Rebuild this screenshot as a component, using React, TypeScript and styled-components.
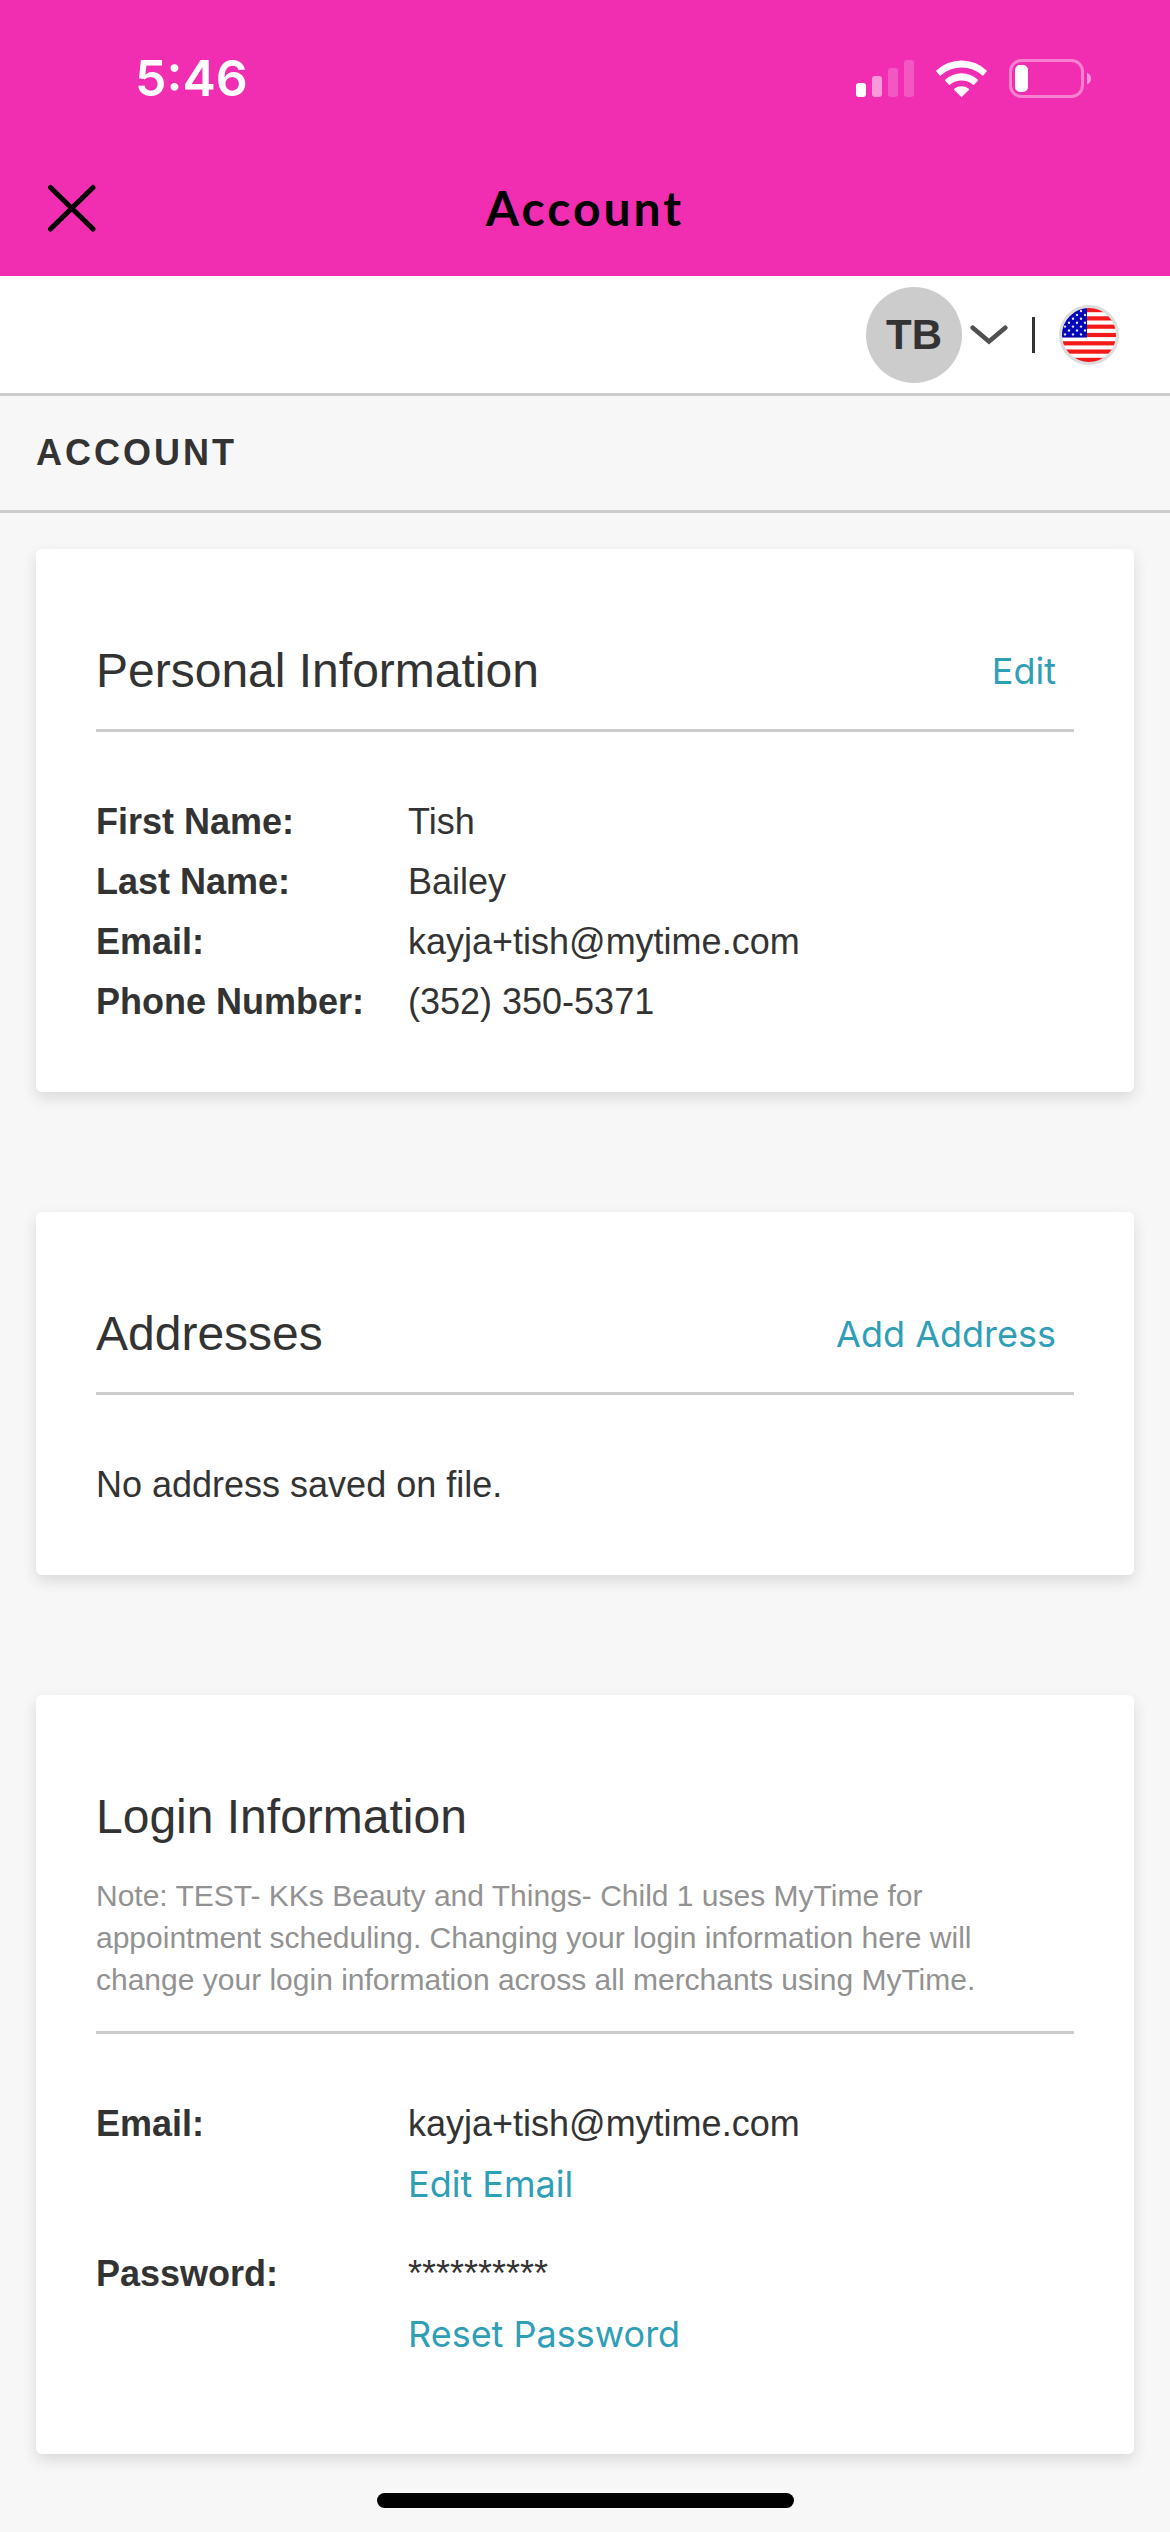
import React from "react";
import styled, { createGlobalStyle } from "styled-components";

const colors = {
  brand: "#f12eb2",
  text: "#333333",
  muted: "#929292",
  link: "#2f9fb7",
  line: "#cccccc",
  page: "#f7f7f7",
};

const GlobalStyle = createGlobalStyle`
  *, *::before, *::after { box-sizing: border-box; }
  body {
    margin: 0;
    background: ${colors.page};
    color: ${colors.text};
    font-family: "Liberation Sans", Arial, sans-serif;
    font-size: 36px;
    line-height: 60px;
  }
  button {
    margin: 0;
    padding: 0;
    border: 0;
    background: none;
    color: inherit;
    font: inherit;
    cursor: pointer;
  }
  h1, h2, p, dl, dd { margin: 0; }
  svg { display: block; }
`;

const Screen = styled.div`
  display: flex;
  flex-direction: column;
`;

const Top = styled.header`
  background: ${colors.brand};
`;

const StatusBar = styled.div`
  display: flex;
  align-items: center;
  justify-content: space-between;
  height: 141px;
  padding: 15px 78px 0 135px;
  color: #ffffff;
`;

const Clock = styled.time`
  font-family: Inter, sans-serif;
  font-size: 50px;
  font-weight: 600;
`;

const StatusIcons = styled.div`
  display: flex;
  align-items: center;
  gap: 22px;
`;

const NavBar = styled.div`
  display: grid;
  grid-template-columns: 48px 1fr 48px;
  align-items: center;
  height: 135px;
  padding: 0 48px 2px;
  color: #000000;
`;

const NavTitle = styled.span`
  font-family: Lato, sans-serif;
  font-size: 48px;
  font-weight: 700;
  letter-spacing: 3px;
  text-align: center;
`;

const Toolbar = styled.div`
  display: flex;
  align-items: center;
  justify-content: flex-end;
  gap: 24px;
  height: 120px;
  padding: 0 51px;
  background: #ffffff;
  border-bottom: 3px solid ${colors.line};
`;

const UserMenu = styled.button`
  display: flex;
  align-items: center;
  gap: 8px;
`;

const Avatar = styled.span`
  display: flex;
  align-items: center;
  justify-content: center;
  width: 96px;
  height: 96px;
  border-radius: 50%;
  background: ${colors.line};
  font-size: 42px;
  font-weight: 700;
`;

const Separator = styled.span`
  width: 3px;
  height: 36px;
  background: ${colors.text};
`;

const PageTitle = styled.h1`
  padding: 27px 36px;
  border-bottom: 3px solid ${colors.line};
  font-size: 36px;
  font-weight: 700;
  line-height: 60px;
  letter-spacing: 3px;
  text-transform: uppercase;
`;

const Cards = styled.main`
  display: flex;
  flex-direction: column;
  gap: 120px;
  padding: 36px 36px 39px;
`;

const Card = styled.section`
  padding: 60px;
  border-radius: 6px;
  background: #ffffff;
  box-shadow: 0 6px 15px rgba(0, 0, 0, 0.12);
`;

const CardHeader = styled.div`
  margin-bottom: 60px;
  border-bottom: 3px solid ${colors.line};
`;

const HeadingRow = styled.div`
  display: flex;
  align-items: center;
  justify-content: space-between;
  height: 120px;
  padding: 3px 18px 0 0;
`;

const Heading = styled.h2`
  font-size: 48px;
  font-weight: 400;
`;

const Note = styled.p`
  padding-bottom: 30px;
  color: ${colors.muted};
  font-size: 30px;
  line-height: 42px;
`;

const LinkButton = styled.button`
  color: ${colors.link};
  font-family: Inter, sans-serif;
`;

const Fields = styled.dl`
  display: flex;
  flex-direction: column;
`;

const Field = styled.div<{ $spaced?: boolean }>`
  display: grid;
  grid-template-columns: 312px 1fr;
  margin-bottom: ${(p) => (p.$spaced ? "30px" : "0")};
`;

const Label = styled.dt`
  font-weight: 700;
`;

const Value = styled.dd`
  display: flex;
  flex-direction: column;
  align-items: flex-start;
`;

const HomeIndicator = styled.div`
  align-self: center;
  width: 417px;
  height: 15px;
  margin-bottom: 24px;
  border-radius: 8px;
  background: #000000;
`;

const SignalIcon = () => (
  <svg width="58" height="37" viewBox="0 0 58 37" fill="#fff" aria-hidden="true">
    <rect x="0" y="23" width="10" height="14" rx="3" />
    <rect x="16" y="16" width="10" height="21" rx="3" opacity="0.5" />
    <rect x="32" y="8" width="10" height="29" rx="3" opacity="0.2" />
    <rect x="48" y="0" width="10" height="37" rx="3" opacity="0.2" />
  </svg>
);

const WifiIcon = () => (
  <svg width="51" height="37" viewBox="0 0 51 37" fill="#fff" aria-hidden="true">
    <path d="M0.3 10.6A36.2 36.2 0 0 1 50.7 10.6Q51 11.1 50.6 11.5L47.3 15.6Q46.9 16 46.4 15.6A31 31 0 0 0 4.6 15.6Q4.1 16 3.7 15.6L0.4 11.5Q0 11.1 0.3 10.6Z" />
    <path d="M9.1 19.7A24 24 0 0 1 41.9 19.7Q42.2 20.2 41.8 20.7L38 24.8Q37.5 25.2 37 24.7A18 18 0 0 0 14 24.7Q13.5 25.2 13 24.8L9.2 20.7Q8.8 20.2 9.1 19.7Z" />
    <path d="M18.2 28.7A12 12 0 0 1 32.8 28.7Q33.3 29.3 32.8 29.9L26.2 36.6Q25.5 37.2 24.8 36.6L18.2 29.9Q17.7 29.3 18.2 28.7Z" />
  </svg>
);

const BatteryIcon = () => (
  <svg width="83" height="39" viewBox="0 0 83 39" fill="#fff" aria-hidden="true">
    <rect x="1.5" y="1.5" width="72" height="36" rx="11" fill="none" stroke="#fff" strokeWidth="3" opacity="0.4" />
    <rect x="6" y="6" width="13" height="27" rx="5" />
    <path d="M78 13.5Q82 15.5 82 19.5Q82 23.5 78 25.5Z" opacity="0.5" />
  </svg>
);

const CloseIcon = () => (
  <svg width="48" height="48" viewBox="0 0 48 48" aria-hidden="true">
    <path d="M2.5 3.5L45 45M45 3.5L2.5 45" stroke="#000" strokeWidth="5" strokeLinecap="round" />
  </svg>
);

const ChevronIcon = () => (
  <svg width="38" height="20" viewBox="0 0 38 20" fill="none" aria-hidden="true">
    <path d="M2.7 2.7L19 16.5L35.3 2.7" stroke="#505050" strokeWidth="4.6" strokeLinecap="round" />
  </svg>
);

const stripes = [0, 1, 2, 3, 4, 5, 6];
const starRows = [0, 1, 2, 3, 4, 5, 6];

const FlagIcon = () => (
  <svg width="60" height="60" viewBox="0 0 60 60" aria-hidden="true">
    <defs>
      <clipPath id="flag-disc">
        <circle cx="30" cy="30" r="27.5" />
      </clipPath>
    </defs>
    <g clipPath="url(#flag-disc)">
      <rect width="60" height="60" fill="#fff" />
      {stripes.map((i) => (
        <rect key={i} x="2" y={3 + i * 8.3} width="56" height="4.2" fill="#f41a1a" />
      ))}
      <rect x="2" y="2" width="26" height="30.5" fill="#0404b4" />
      {starRows.map((row) =>
        [0, 1, 2].map((col) => (
          <circle
            key={`${row}-${col}`}
            cx={(row % 2 ? 10 : 6) + col * 8}
            cy={6 + row * 3.9}
            r="1.2"
            fill="#dfe4ff"
          />
        ))
      )}
    </g>
    <circle cx="30" cy="30" r="28.5" fill="none" stroke="#dcdcdc" strokeWidth="3" />
  </svg>
);

const personal = [
  { label: "First Name:", value: "Tish" },
  { label: "Last Name:", value: "Bailey" },
  { label: "Email:", value: "kayja+tish@mytime.com" },
  { label: "Phone Number:", value: "(352) 350-5371" },
];

const login = [
  { label: "Email:", value: "kayja+tish@mytime.com", action: "Edit Email" },
  { label: "Password:", value: "**********", action: "Reset Password" },
];

export default function App() {
  return (
    <Screen>
      <GlobalStyle />
      <Top>
        <StatusBar>
          <Clock>5:46</Clock>
          <StatusIcons>
            <SignalIcon />
            <WifiIcon />
            <BatteryIcon />
          </StatusIcons>
        </StatusBar>
        <NavBar>
          <button type="button" aria-label="Close">
            <CloseIcon />
          </button>
          <NavTitle>Account</NavTitle>
        </NavBar>
      </Top>

      <Toolbar>
        <UserMenu type="button" aria-label="User menu">
          <Avatar>TB</Avatar>
          <ChevronIcon />
        </UserMenu>
        <Separator />
        <button type="button" aria-label="Language">
          <FlagIcon />
        </button>
      </Toolbar>

      <PageTitle>Account</PageTitle>

      <Cards>
        <Card>
          <CardHeader>
            <HeadingRow>
              <Heading>Personal Information</Heading>
              <LinkButton type="button">Edit</LinkButton>
            </HeadingRow>
          </CardHeader>
          <Fields>
            {personal.map((field) => (
              <Field key={field.label}>
                <Label>{field.label}</Label>
                <Value>{field.value}</Value>
              </Field>
            ))}
          </Fields>
        </Card>

        <Card>
          <CardHeader>
            <HeadingRow>
              <Heading>Addresses</Heading>
              <LinkButton type="button">Add Address</LinkButton>
            </HeadingRow>
          </CardHeader>
          <p>No address saved on file.</p>
        </Card>

        <Card>
          <CardHeader>
            <HeadingRow>
              <Heading>Login Information</Heading>
            </HeadingRow>
            <Note>
              Note: TEST- KKs Beauty and Things- Child 1 uses MyTime for appointment scheduling.
              Changing your login information here will change your login information across all
              merchants using MyTime.
            </Note>
          </CardHeader>
          <Fields>
            {login.map((field) => (
              <Field key={field.label} $spaced>
                <Label>{field.label}</Label>
                <Value>
                  {field.value}
                  <LinkButton type="button">{field.action}</LinkButton>
                </Value>
              </Field>
            ))}
          </Fields>
        </Card>
      </Cards>

      <HomeIndicator />
    </Screen>
  );
}
